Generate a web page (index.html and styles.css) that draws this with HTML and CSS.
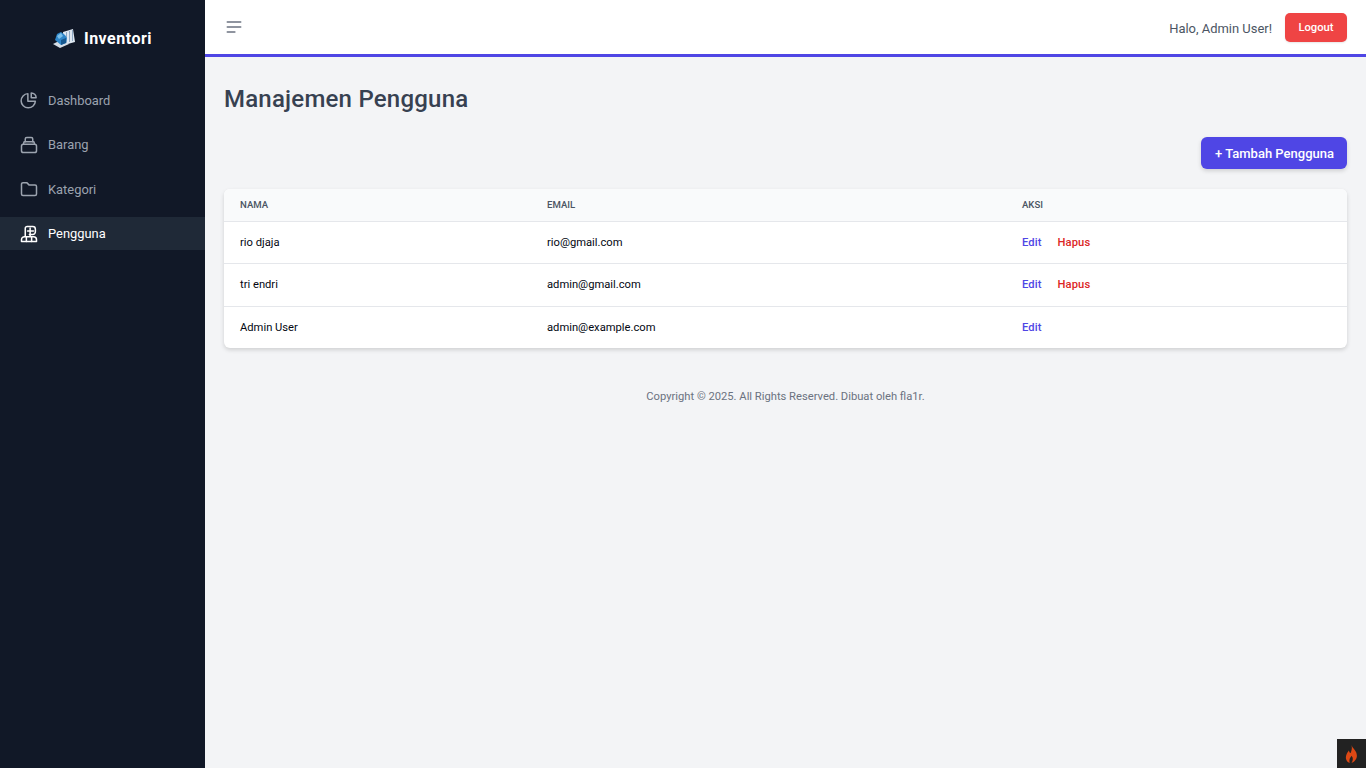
FILE: index.html
```html
<!DOCTYPE html>
<html lang="en">
<head>
    <meta charset="UTF-8">
    <meta name="viewport" content="width=device-width, initial-scale=1.0">
    <title>Manajemen Pengguna</title>
    <link rel="stylesheet" href="styles.css">
</head>
<body>
    <aside class="sidebar">
        <div class="brand">
            <svg class="brand-logo" viewBox="0 0 22 20" width="22" height="20">
                <path d="M10 4 L20 1 L22 14 L11 17 Z" fill="#dfe8f2"/>
                <path d="M13.500 4v11M16.500 3v11M19.500 2v11" stroke="#8fa9c4" stroke-width="1"/>
                <path d="M0 16 L7 20 L16 16 L8 12 Z" fill="#d5dde6"/>
                <path d="M2 12 L4 6 L8 4 L12 7 L14 10 L13 15 L8 17 Z" fill="#2f86c9"/>
                <path d="M4 8 L8 5 L10 8 L6 11 Z" fill="#7cc0ea"/>
                <path d="M8 12 L13 10 L13 15 L8 17 Z" fill="#15578f"/>
            </svg>
            <span>Inventori</span>
        </div>
        <nav class="nav">
            <a class="nav-item" href="#">
                <svg class="nav-icon" viewBox="0 0 24 24"><path d="M10.500 3.500A9.500 9.500 0 1 0 20.500 13.500H10.500Z"/><path d="M15 2.500A6.500 6.500 0 0 1 21.500 9H15Z"/></svg>
                Dashboard
            </a>
            <a class="nav-item" href="#">
                <svg class="nav-icon" viewBox="0 0 24 24"><rect x="2" y="11" width="20" height="11" rx="2.500"/><path d="M4.500 11L5.500 7.500H18.500L19.500 11"/><path d="M7 7.500V4A2 2 0 0 1 9 2H15A2 2 0 0 1 17 4V7.500"/></svg>
                Barang
            </a>
            <a class="nav-item" href="#">
                <svg class="nav-icon" viewBox="0 0 24 24"><path d="M2 5.500A2 2 0 0 1 4 3.500H9L12 6.500H20A2 2 0 0 1 22 8.500V18.500A2 2 0 0 1 20 20.500H4A2 2 0 0 1 2 18.500Z"/></svg>
                Kategori
            </a>
            <a class="nav-item active" href="#">
                <svg class="nav-icon" viewBox="0 0 24 24"><path d="M7 15V4.500A2.500 2.500 0 0 1 9.500 2H17A3.500 3.500 0 0 1 20.500 5.500V9A3.500 3.500 0 0 1 17 12.500H12.500"/><path d="M13.500 4V15M10 8H18"/><path d="M2 22V19.500A4 4 0 0 1 6 15.500H18A4 4 0 0 1 22 19.500V22Z"/><path d="M8.500 15.500V22M15.500 15.500V22"/></svg>
                Pengguna
            </a>
        </nav>
    </aside>

    <div class="main">
        <header class="topbar">
            <button class="menu-btn" type="button" aria-label="Menu">
                <svg viewBox="0 0 24 24" width="20" height="20"><path d="M4 6H20M4 12H20M4 18H13"/></svg>
            </button>
            <div class="user-box">
                <span class="greeting">Halo, Admin User!</span>
                <a class="btn-logout" href="#">Logout</a>
            </div>
        </header>

        <main class="content">
            <h1>Manajemen Pengguna</h1>
            <div class="actions">
                <a class="btn-add" href="#">+ Tambah Pengguna</a>
            </div>
            <div class="table-card">
                <table>
                    <thead>
                        <tr>
                            <th class="col-name">Nama</th>
                            <th class="col-email">Email</th>
                            <th>Aksi</th>
                        </tr>
                    </thead>
                    <tbody>
                        <tr>
                            <td>rio djaja</td>
                            <td>rio@gmail.com</td>
                            <td><a class="link-edit" href="#">Edit</a><a class="link-delete" href="#">Hapus</a></td>
                        </tr>
                        <tr>
                            <td>tri endri</td>
                            <td>admin@gmail.com</td>
                            <td><a class="link-edit" href="#">Edit</a><a class="link-delete" href="#">Hapus</a></td>
                        </tr>
                        <tr>
                            <td>Admin User</td>
                            <td>admin@example.com</td>
                            <td><a class="link-edit" href="#">Edit</a></td>
                        </tr>
                    </tbody>
                </table>
            </div>
            <footer class="footer">Copyright © 2025. All Rights Reserved. Dibuat oleh fla1r.</footer>
        </main>
    </div>

    <div class="debug-tab">
        <svg viewBox="0 0 16 20" width="15" height="18"><path d="M8 0C9 4 14 6 14 12C14 16 11 19 8 20C10 17 10 14 8 12C7 14 5 15 6 20C3 19 1 16 2 12C2.500 9 4 8 5 6C6 8 6 9 7 9C8 6 9 4 8 0Z" fill="#dd4814"/></svg>
    </div>
</body>
</html>
```

FILE: styles.css
```css
* {
    box-sizing: border-box;
}
html, body {
    height: 100%;
}
body {
    margin: 0;
    display: flex;
    font-family: Roboto, "Noto Sans", sans-serif;
    background-color: #f3f4f6;
    color: #374151;
    overflow: hidden;
}
a {
    text-decoration: none;
}

/* sidebar */
.sidebar {
    width: 205px;
    flex-shrink: 0;
    background-color: #111827;
    padding-top: 26px;
}
.brand {
    display: flex;
    align-items: center;
    justify-content: center;
    gap: 9px;
    height: 24px;
    color: #fff;
    font-size: 16px;
    font-weight: 700;
    letter-spacing: 0.500px;
}
.nav {
    margin-top: 33.500px;
    display: flex;
    flex-direction: column;
}
.nav-item {
    display: flex;
    align-items: center;
    gap: 10px;
    height: 33px;
    margin-bottom: 11.500px;
    padding-left: 20px;
    font-size: 12.900px;
    color: #9ca3af;
}
.nav-item.active {
    background-color: #1f2937;
    color: #fff;
}
.nav-icon {
    width: 18px;
    height: 18px;
    fill: none;
    stroke: currentColor;
    stroke-width: 2;
    stroke-linejoin: round;
    stroke-linecap: round;
}

/* top bar */
.main {
    flex: 1;
    min-width: 0;
    display: flex;
    flex-direction: column;
}
.topbar {
    height: 57px;
    flex-shrink: 0;
    background-color: #fff;
    border-bottom: 3px solid #4f46e5;
    display: flex;
    align-items: center;
    justify-content: space-between;
    padding: 0 19px;
}
.menu-btn {
    border: none;
    background: none;
    padding: 0;
    display: flex;
    color: #6b7280;
}
.menu-btn svg {
    fill: none;
    stroke: currentColor;
    stroke-width: 2;
    stroke-linecap: round;
}
.user-box {
    display: flex;
    align-items: center;
    gap: 13px;
}
.greeting {
    padding-top: 2px;
    font-size: 12.950px;
    color: #4b5563;
}
.btn-logout {
    display: block;
    padding: 6px 13.500px;
    height: 29px;
    border-radius: 5px;
    background-color: #ef4444;
    color: #fff;
    font-size: 11.200px;
    font-weight: 500;
    line-height: 17px;
    box-shadow: 0 1px 2px rgba(0, 0, 0, 0.1);
}

/* content */
.content {
    padding: 25px 19px;
}
h1 {
    margin: 0;
    font-size: 24px;
    line-height: 34px;
    font-weight: 500;
    letter-spacing: 0.220px;
    color: #374151;
}
.actions {
    display: flex;
    justify-content: flex-end;
    margin-top: 21px;
}
.btn-add {
    display: block;
    height: 32px;
    padding: 0 13px 0 14px;
    line-height: 34px;
    border-radius: 6px;
    background-color: #4f46e5;
    color: #fff;
    font-size: 13px;
    font-weight: 500;
    box-shadow: 0 2px 4px rgba(0, 0, 0, 0.15);
}
.table-card {
    margin-top: 20px;
    background-color: #fff;
    border-radius: 6px;
    overflow: hidden;
    box-shadow: 0 2px 4px rgba(0, 0, 0, 0.15);
}
table {
    width: 100%;
    border-collapse: collapse;
    table-layout: fixed;
}
th {
    height: 32px;
    padding: 0 16px;
    text-align: left;
    font-size: 9.600px;
    font-weight: 500;
    text-transform: uppercase;
    color: #4b5563;
    background-color: #f9fafb;
    border-bottom: 1px solid #e5e7eb;
}
.col-name {
    width: 307px;
}
.col-email {
    width: 475px;
}
td {
    height: 42px;
    padding: 0 16px;
    font-size: 11.200px;
    color: #030712;
    border-bottom: 1px solid #e5e7eb;
}
tbody tr:nth-child(2) td {
    height: 43px;
}
tbody tr:last-child td {
    border-bottom: none;
}
.link-edit,
.link-delete {
    font-weight: 500;
    letter-spacing: 0.100px;
}
.link-edit {
    color: #4f46e5;
}
.link-delete {
    margin-left: 16px;
    color: #dc2626;
}
.footer {
    margin-top: 42px;
    text-align: center;
    font-size: 11.200px;
    color: #6b7280;
}

/* floating tab bottom right */
.debug-tab {
    position: fixed;
    right: 0;
    bottom: 0;
    width: 29px;
    height: 29px;
    background-color: #222;
    display: flex;
    align-items: center;
    justify-content: center;
}
```
